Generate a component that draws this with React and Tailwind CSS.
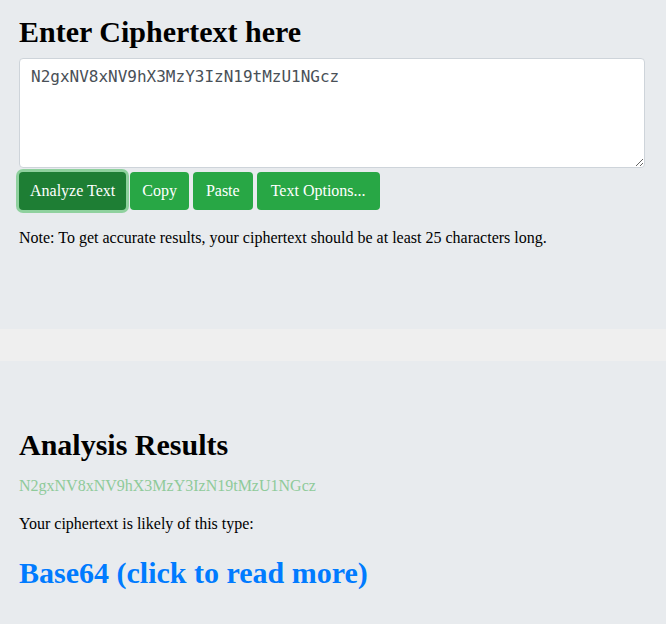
import React, { useState } from 'react';

const CIPHER = 'N2gxNV8xNV9hX3MzY3IzN19tMzU1NGcz';

const App = () => {
  const [text, setText] = useState(CIPHER);

  return (
    <div className="min-h-[624px] bg-[#e8ebee] text-black font-['Liberation_Serif',serif]">
      {/* Input section */}
      <section className="pl-[19px] pr-[21px] pt-[14px] pb-[79px]">
        <h1 className="text-[30px] leading-[36px] font-bold mb-[8px]">
          Enter Ciphertext here
        </h1>
        <textarea
          value={text}
          onChange={e => setText(e.target.value)}
          className="block w-full h-[110px] bg-white border border-[#ced4da] rounded-[4px] px-[11px] py-[6px] text-[16px] leading-[24px] text-[#495057] font-['DejaVu_Sans_Mono',monospace] outline-none"
        />
        <div className="flex gap-[4px] mt-[4px]">
          <button className="h-[38px] px-[11px] rounded-[4px] bg-[#1e7e34] text-white text-[16px] ring-[3px] ring-[#8fd19e]">
            Analyze Text
          </button>
          <button className="h-[38px] px-[12px] rounded-[4px] bg-[#28a745] text-white text-[16px]">
            Copy
          </button>
          <button className="h-[38px] px-[13px] rounded-[4px] bg-[#28a745] text-white text-[16px]">
            Paste
          </button>
          <button className="h-[38px] px-[14px] rounded-[4px] bg-[#28a745] text-white text-[16px]">
            Text Options...
          </button>
        </div>
        <p className="mt-[16px] text-[16px] leading-[24px]">
          Note: To get accurate results, your ciphertext should be at least 25 characters long.
        </p>
      </section>

      {/* Divider band */}
      <div className="h-[32px] bg-[#efefef]" />

      {/* Results section */}
      <section className="px-[19px] pt-[66px] pb-[20px]">
        <h2 className="text-[30px] leading-[36px] font-bold">Analysis Results</h2>
        <p className="mt-[11px] text-[16px] leading-[24px] text-[#8fca9a]">{CIPHER}</p>
        <p className="mt-[14px] text-[16px] leading-[24px]">
          Your ciphertext is likely of this type:
        </p>
        <a href="#" className="block mt-[19px] text-[30px] leading-[36px] font-bold text-[#007bff]">
          Base64 (click to read more)
        </a>
      </section>
    </div>
  );
};

export default App;
